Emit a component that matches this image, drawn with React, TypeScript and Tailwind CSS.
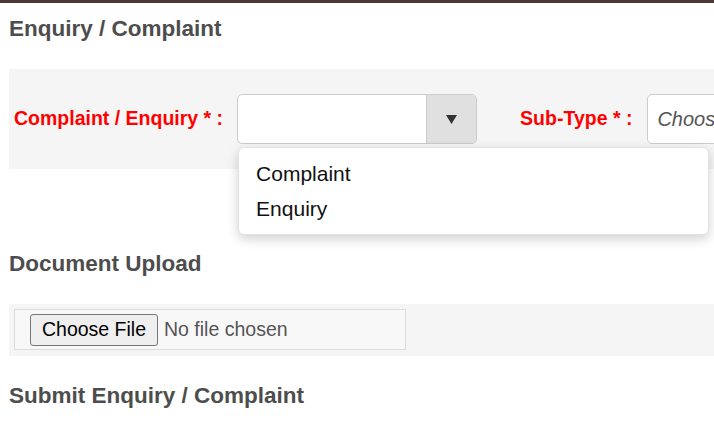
import React from 'react';

const font = { fontFamily: '"Liberation Sans", Arial, sans-serif' };

function Heading({ children, className = '' }: { children: React.ReactNode; className?: string }) {
  return (
    <h2 className={`text-[22.5px] leading-[25px] font-bold text-[#4d4d4d] ${className}`}>{children}</h2>
  );
}

export default function App() {
  return (
    <div className="w-full h-[433px] overflow-hidden bg-white" style={font}>
      <div className="h-[3px] bg-[#4a3a32]" />
      <div className="pl-[9px]">
        <Heading className="mt-[13px]">Enquiry / Complaint</Heading>

        <div className="mt-[28px] h-[100px] bg-[#f5f5f5] flex items-center pl-[5px] whitespace-nowrap">
          <span className="text-[19.5px] font-bold text-[#ff0000]">Complaint / Enquiry * :</span>
          <div className="relative ml-[14px] shrink-0">
            <div className="w-[240px] h-[50px] flex bg-white border border-[#cccccc] rounded-[5px] overflow-hidden">
              <div className="flex-1" />
              <div className="w-[50px] bg-[#e0e0e0] border-l border-[#cccccc] flex items-center justify-center">
                <svg width="11" height="9" viewBox="0 0 11 9">
                  <path d="M0 0 H11 L5.5 9 Z" fill="#333" />
                </svg>
              </div>
            </div>
            <div className="absolute z-10 top-[53px] left-[1px] w-[471px] bg-white rounded-[6px] border border-[#e2e2e2] shadow-[0_4px_12px_rgba(0,0,0,0.18)] py-[8px]">
              <div className="h-[35px] flex items-center pl-[17px] text-[21px] text-[#111]">Complaint</div>
              <div className="h-[35px] flex items-center pl-[17px] text-[21px] text-[#111]">Enquiry</div>
            </div>
          </div>
          <span className="ml-[43px] text-[19.5px] font-bold text-[#ff0000]">Sub-Type * :</span>
          <div className="ml-[15px] shrink-0 w-[220px] h-[50px] bg-white border border-[#cccccc] rounded-[5px] flex items-center pl-[9px]">
            <span className="text-[20px] italic text-[#555]">Choose...</span>
          </div>
        </div>

        <Heading className="mt-[82px]">Document Upload</Heading>

        <div className="mt-[28px] h-[52px] bg-[#f5f5f5] pt-[5px] pl-[5px]">
          <div className="w-[392px] h-[41px] bg-[#f8f8f8] border border-[#dcdcdc] flex items-center pl-[15px]">
            <button className="h-[32px] w-[128px] bg-[#efefef] border border-[#767676] rounded-[3px] text-[19.5px] text-black">
              Choose File
            </button>
            <span className="ml-[6px] text-[19.5px] text-[#555]">No file chosen</span>
          </div>
        </div>

        <Heading className="mt-[27px]">Submit Enquiry / Complaint</Heading>
      </div>
    </div>
  );
}
